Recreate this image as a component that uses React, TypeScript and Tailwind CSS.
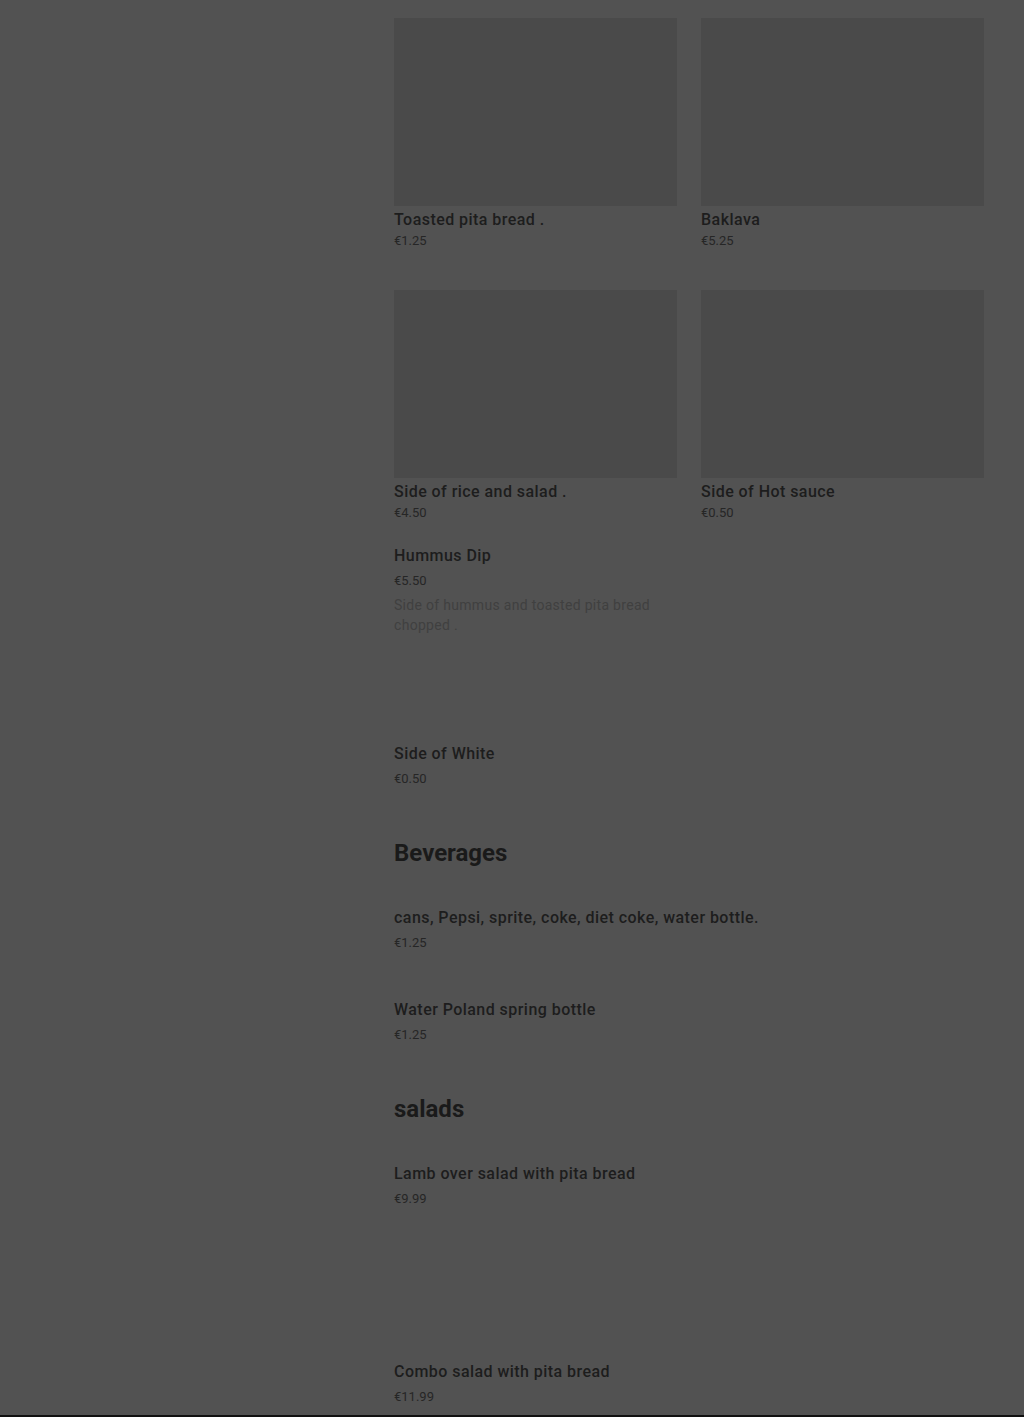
const imageItems = [
  { name: "Toasted pita bread .", price: "€1.25" },
  { name: "Baklava", price: "€5.25" },
  { name: "Side of rice and salad .", price: "€4.50" },
  { name: "Side of Hot sauce", price: "€0.50" },
];

function ImageCard({ name, price }: { name: string; price: string }) {
  return (
    <div>
      <div className="h-[188px] bg-[#4a4a4a]" />
      <div className="mt-[2px] text-base leading-6 font-medium tracking-[0.45px] text-[#1d1d1d]">
        {name}
      </div>
      <div className="text-[13px] leading-[18px] text-[#262626]">{price}</div>
    </div>
  );
}

function Item({
  name,
  price,
  desc,
  className = "",
}: {
  name: string;
  price: string;
  desc?: string;
  className?: string;
}) {
  return (
    <div className={`w-[283px] ${className}`}>
      <div className="text-base leading-6 font-medium tracking-[0.45px] whitespace-nowrap text-[#1d1d1d]">
        {name}
      </div>
      <div className="mt-[3px] text-[13px] leading-5 text-[#262626]">
        {price}
      </div>
      {desc && (
        <p className="mt-1 text-sm leading-5 tracking-[0.3px] text-[#404040]">
          {desc}
        </p>
      )}
    </div>
  );
}

export default function App() {
  return (
    <div
      className="h-[1417px] overflow-hidden bg-[#525252] border-b-2 border-[#111]"
      style={{ fontFamily: "Roboto, 'Liberation Sans', sans-serif" }}
    >
      <div className="ml-[394px] w-[590px] pt-[18px]">
        <div className="grid grid-cols-2 gap-x-6 gap-y-10">
          {imageItems.map((it) => (
            <ImageCard key={it.name} {...it} />
          ))}
        </div>

        <Item
          className="mt-[22px]"
          name="Hummus Dip"
          price="€5.50"
          desc="Side of hummus and toasted pita bread chopped ."
        />
        <Item className="mt-[107px]" name="Side of White" price="€0.50" />

        <h2 className="mt-12 text-2xl leading-8 font-bold text-[#1a1a1a]">
          Beverages
        </h2>
        <Item
          className="mt-[37px]"
          name="cans, Pepsi, sprite, coke, diet coke, water bottle."
          price="€1.25"
        />
        <Item
          className="mt-[45px]"
          name="Water Poland spring bottle"
          price="€1.25"
        />

        <h2 className="mt-12 text-2xl leading-8 font-bold text-[#1a1a1a]">
          salads
        </h2>
        <Item
          className="mt-[37px]"
          name="Lamb over salad with pita bread"
          price="€9.99"
        />
        <Item
          className="mt-[151px]"
          name="Combo salad with pita bread"
          price="€11.99"
        />
      </div>
    </div>
  );
}
